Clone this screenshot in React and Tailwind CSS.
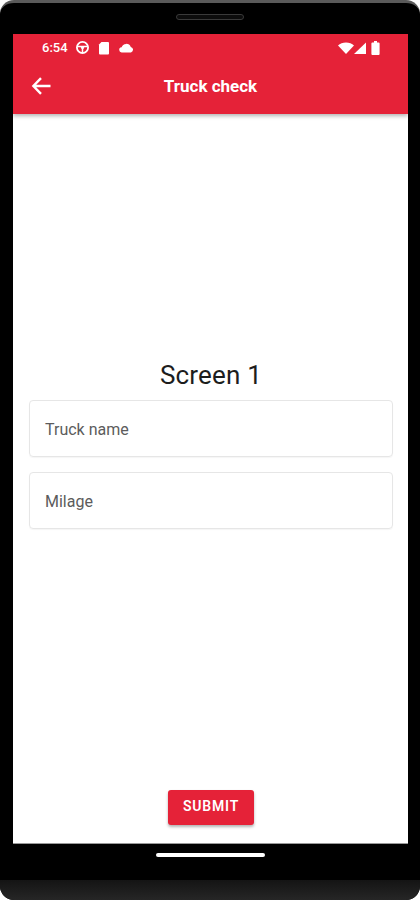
import React from "react";

function Status() {
  return (
    <div className="h-[27px] flex items-center justify-between pl-[29px] pr-[28px] text-white">
      <div className="flex items-center">
        <span className="text-[13px] leading-none font-medium">6:54</span>
        <svg className="ml-[7px]" width="15" height="15" viewBox="0 0 15 15" fill="none" stroke="white">
          <circle cx="7.5" cy="7.5" r="5.6" strokeWidth="1.8" />
          <circle cx="7.5" cy="7.5" r="1.6" fill="white" stroke="none" />
          <path d="M2 6.6h11M7.5 8v5" strokeWidth="1.5" />
        </svg>
        <svg className="ml-[8px]" width="12" height="14" viewBox="0 0 12 14" fill="white">
          <path d="M3.5 1H10a1 1 0 0 1 1 1v10.5a1 1 0 0 1-1 1H2a1 1 0 0 1-1-1V3.6z" />
        </svg>
        <svg className="ml-[9px]" width="15" height="11" viewBox="0 0 15 11" fill="white">
          <path d="M3 10.5A2.6 2.6 0 0 1 2.6 5.3 4.9 4.9 0 0 1 11.8 4.9 2.9 2.9 0 0 1 12 10.5z" />
        </svg>
      </div>
      <div className="flex items-center">
        <svg width="16" height="12" viewBox="0 0 16 12" fill="white"><path d="M8 12 0 3.4C2 1.4 4.8.4 8 .4s6 1 8 3z" /></svg>
        <svg width="13" height="12" viewBox="0 0 13 12" fill="white"><path d="M0 12 12 .5V12z" /></svg>
        <svg className="ml-[4px]" width="9" height="14" viewBox="0 0 9 14" fill="white"><path d="M3 0h3v1.4h1.6a1 1 0 0 1 1 1V13a1 1 0 0 1-1 1H1.4a1 1 0 0 1-1-1V2.4a1 1 0 0 1 1-1H3z" /></svg>
      </div>
    </div>
  );
}

function Field({ label }) {
  return (
    <div className="h-[57px] border border-[#e6e6e6] rounded-[4px] flex items-center pl-[15px] pt-[3px] text-[16px] text-[#5c5c5c] shadow-[0_1px_1px_rgba(0,0,0,0.04)]">
      {label}
    </div>
  );
}

export default function App() {
  return (
    <div className="w-[420px] h-[900px] bg-white overflow-hidden font-['Roboto',sans-serif] flex flex-col">
      <div className="w-full h-[900px] bg-black rounded-t-[14px] rounded-b-[14px] border-t-[3px] border-[#5a5a5a] flex flex-col overflow-hidden">
        <div className="h-[31px] flex justify-center pt-[11px] shrink-0">
          <div className="w-[68px] h-[6px] rounded-full bg-[#0c0c0c] border border-[#3a3a3a]" />
        </div>
        <div className="flex-none h-[810px] ml-[13px] mr-[12px] bg-white flex flex-col border-b border-[#999]">
          <div className="bg-[#e52238] h-[80px] shrink-0 shadow-[0_2px_4px_rgba(0,0,0,0.3)]">
            <Status />
            <div className="h-[53px] relative flex items-center justify-center pb-[2px]">
              <svg className="absolute left-[18px] top-[15px]" width="20" height="20" viewBox="0 0 20 20" fill="none" stroke="white" strokeWidth="2.4">
                <path d="M19.5 10H2.5M10 2.2 2.4 10l7.6 7.8" />
              </svg>
              <span className="text-white font-bold text-[17px]">Truck check</span>
            </div>
          </div>
          <div className="flex-1 flex flex-col pl-[16px] pr-[15px]">
            <div className="pt-[244px] h-[286px] text-center text-[26px] leading-[34px] text-[#1d1d1d] font-normal tracking-[0.2px]">
              Screen 1
            </div>
            <div className="flex flex-col gap-[15px]">
              <Field label="Truck name" />
              <Field label="Milage" />
            </div>
            <div className="flex-1 flex items-end justify-center pb-[18px]">
              <div className="w-[86px] h-[35px] pb-[2px] bg-[#e52238] rounded-[3px] text-white text-[14px] font-semibold tracking-[0.8px] flex items-center justify-center shadow-[0_2px_3px_rgba(0,0,0,0.3)]">
                SUBMIT
              </div>
            </div>
          </div>
        </div>
        <div className="h-[36px] flex justify-center pt-[9px] shrink-0">
          <div className="w-[109px] h-[4px] rounded-full bg-white" />
        </div>
        <div className="flex-1 bg-gradient-to-b from-[#141414] to-[#262626]" />
      </div>
    </div>
  );
}
